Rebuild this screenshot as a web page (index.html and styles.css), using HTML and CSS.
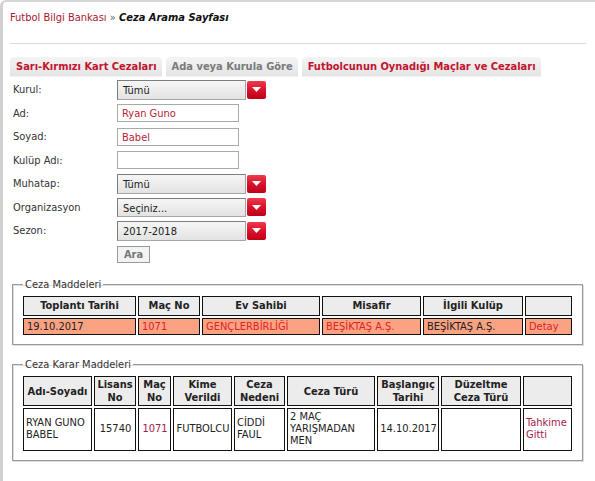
FILE: index.html
```html
<!DOCTYPE html>
<html lang="tr">
<head>
<meta charset="utf-8">
<title>Ceza Arama Sayfası</title>
<link rel="stylesheet" href="styles.css">
</head>
<body>
<div class="frame">
  <div class="page">
    <div class="crumb"><span class="crumb-link">Futbol Bilgi Bankası</span> <span class="sep">»</span> <span class="crumb-title">Ceza Arama Sayfası</span></div>
    <div class="rule"></div>
    <div class="tabs">
      <span class="tab">Sarı-Kırmızı Kart Cezaları</span>
      <span class="tab tab-muted">Ada veya Kurula Göre</span>
      <span class="tab">Futbolcunun Oynadığı Maçlar ve Cezaları</span>
    </div>
    <div class="form">
      <div class="row"><span class="label">Kurul:</span><span class="select">Tümü</span><span class="drop"><svg width="9" height="5" viewBox="0 0 9 5"><path d="M0 0H9L4.5 5Z" fill="#fff"/></svg></span></div>
      <div class="row"><span class="label">Ad:</span><span class="input">Ryan Guno</span></div>
      <div class="row"><span class="label">Soyad:</span><span class="input">Babel</span></div>
      <div class="row"><span class="label">Kulüp Adı:</span><span class="input"></span></div>
      <div class="row"><span class="label">Muhatap:</span><span class="select">Tümü</span><span class="drop"><svg width="9" height="5" viewBox="0 0 9 5"><path d="M0 0H9L4.5 5Z" fill="#fff"/></svg></span></div>
      <div class="row"><span class="label">Organizasyon</span><span class="select">Seçiniz...</span><span class="drop"><svg width="9" height="5" viewBox="0 0 9 5"><path d="M0 0H9L4.5 5Z" fill="#fff"/></svg></span></div>
      <div class="row"><span class="label">Sezon:</span><span class="select">2017-2018</span><span class="drop"><svg width="9" height="5" viewBox="0 0 9 5"><path d="M0 0H9L4.5 5Z" fill="#fff"/></svg></span></div>
      <div class="row"><span class="label"></span><span class="btn">Ara</span></div>
    </div>

    <fieldset class="box box-first">
      <legend>Ceza Maddeleri</legend>
      <table class="grid grid-1">
        <colgroup><col class="w113"><col class="w62"><col class="w118"><col class="w99"><col class="w100"><col class="w47"></colgroup>
        <tr><th>Toplantı Tarihi</th><th>Maç No</th><th>Ev Sahibi</th><th>Misafir</th><th>İlgili Kulüp</th><th></th></tr>
        <tr class="hit"><td>19.10.2017</td><td class="red">1071</td><td class="red">GENÇLERBİRLİĞİ</td><td class="red">BEŞİKTAŞ A.Ş.</td><td>BEŞİKTAŞ A.Ş.</td><td class="red">Detay</td></tr>
      </table>
    </fieldset>

    <fieldset class="box box-second">
      <legend>Ceza Karar Maddeleri</legend>
      <table class="grid grid-2">
        <colgroup><col class="w69"><col class="w42"><col class="w33"><col class="w59"><col class="w51"><col class="w88"><col class="w62"><col class="w80"><col class="w49"></colgroup>
        <tr><th>Adı-Soyadı</th><th>Lisans<br>No</th><th>Maç<br>No</th><th>Kime<br>Verildi</th><th>Ceza<br>Nedeni</th><th>Ceza Türü</th><th>Başlangıç<br>Tarihi</th><th>Düzeltme<br>Ceza Türü</th><th></th></tr>
        <tr><td>RYAN GUNO BABEL</td><td class="c">15740</td><td class="c link">1071</td><td class="c">FUTBOLCU</td><td>CİDDİ FAUL</td><td>2 MAÇ YARIŞMADAN MEN</td><td class="c">14.10.2017</td><td></td><td class="link">Tahkime Gitti</td></tr>
      </table>
    </fieldset>
  </div>
</div>
</body>
</html>
```

FILE: styles.css
```css
html, body {
  margin: 0;
  background: #fff;
}
body {
  font-family: "DejaVu Sans Condensed", "DejaVu Sans", sans-serif;
  font-size: 11px;
  color: #333;
}
.frame {
  height: 481px;
  box-sizing: border-box;
  border-top: 2px solid #d6d6d6;
  border-left: 3px solid #d0d0d0;
  border-top-left-radius: 6px;
  overflow: hidden;
}
.page {
  padding-left: 7px;
}
.crumb {
  padding-top: 8px;
  line-height: 16px;
  font-size: 11px;
}
.crumb-link { color: #a8182f; }
.sep { color: #666; }
.crumb-title {
  font-weight: bold;
  font-style: italic;
  color: #111;
}
.rule {
  margin-top: 17px;
  height: 1px;
  width: 576px;
  background: #dcdcdc;
}
.tabs {
  margin-top: 13px;
  display: flex;
  gap: 4px;
}
.tab {
  height: 19px;
  line-height: 20px;
  padding: 0 5px 0 6px;
  font-size: 11px;
  font-weight: bold;
  color: #c3142f;
  background: linear-gradient(#f4f4f4, #e4e4e4);
  border-radius: 4px 4px 0 0;
  box-shadow: 0 1px 1px rgba(0,0,0,0.06);
}
.tab-muted { color: #7a7a7a; }
.form {
  margin-top: 4px;
  padding-left: 3px;
}
.row {
  display: flex;
  align-items: center;
  height: 19.5px;
  margin-bottom: 4px;
}
.label {
  width: 104px;
  flex: none;
  font-size: 11px;
  color: #333;
}
.select {
  box-sizing: border-box;
  width: 129px;
  height: 19.5px;
  line-height: 19px;
  padding-left: 5px;
  font-size: 11px;
  color: #222;
  border: 1px solid #7d7d7d;
  border-right-color: #a5a5a5;
  border-bottom-color: #a5a5a5;
  background: linear-gradient(#f6f6f6, #e3e3e3);
}
.drop {
  box-sizing: border-box;
  width: 19px;
  height: 18px;
  margin-left: 1px;
  border-radius: 2px;
  background: linear-gradient(#ef3a4d 0%, #d8132b 50%, #c10017 100%);
  display: flex;
  align-items: center;
  justify-content: center;
}
.input {
  box-sizing: border-box;
  width: 122px;
  height: 18px;
  line-height: 17px;
  padding-left: 4px;
  font-size: 11px;
  color: #bb2238;
  border: 1px solid #a9a9a9;
  background: #fff;
}
.btn {
  box-sizing: border-box;
  width: 33px;
  height: 17px;
  line-height: 15px;
  text-align: center;
  font-weight: bold;
  font-size: 11px;
  color: #777;
  border: 1px solid #9a9a9a;
  background: #f3f3f3;
}
.box {
  box-sizing: border-box;
  width: 571px;
  margin: 0 0 0 2px;
  padding: 3px 9px 7px 8px;
  border: 1px solid #9a9a9a;
  box-shadow: inset 1px 1px 0 #dedede, 1px 1px 0 #dedede;
  min-inline-size: 0;
}
.box-first { margin-top: 14px; }
.box-second { margin-top: 13px; }
.box legend {
  padding: 0 2px;
  margin-left: 2px;
  line-height: 13px;
  font-size: 11px;
  color: #333;
}
.grid {
  table-layout: fixed;
  width: 553px;
  border-collapse: separate;
  border-spacing: 2px;
}
.grid th, .grid td {
  border: 1px solid #111;
  font-size: 11px;
  overflow: hidden;
}
.grid th {
  background: #ececec;
  font-weight: bold;
  color: #222;
  text-align: center;
}
.grid-1 th {
  height: 18px;
  padding: 0 2px;
  line-height: 14px;
}
.grid-1 td {
  height: 15px;
  padding: 0 3px;
  line-height: 13px;
}
.hit td {
  background: #fba283;
  color: #222;
}
.hit td.red { color: #df2424; }
.grid-2 th {
  padding: 1px 1px;
  line-height: 13px;
  height: 26px;
}
.grid-2 td {
  height: 36px;
  padding: 2px 1px 3px 2px;
  line-height: 12px;
  color: #222;
  text-align: left;
}
.grid-2 td.c { text-align: center; }
.grid-2 td.link { color: #a3214a; }
.w113 { width: 113px; }
.w62 { width: 62px; }
.w118 { width: 118px; }
.w99 { width: 99px; }
.w100 { width: 100px; }
.w47 { width: 47px; }
.w69 { width: 69px; }
.w42 { width: 42px; }
.w33 { width: 33px; }
.w59 { width: 59px; }
.w51 { width: 51px; }
.w88 { width: 88px; }
.w80 { width: 80px; }
.w49 { width: 49px; }
```
